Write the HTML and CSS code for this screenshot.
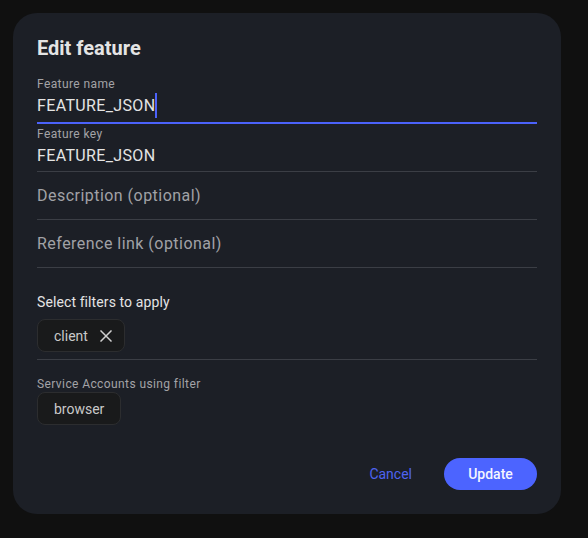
FILE: index.html
```html
<!DOCTYPE html>
<html lang="en">
<head>
<meta charset="utf-8">
<title>Edit feature</title>
<link rel="stylesheet" href="styles.css">
</head>
<body>
<div class="page">
  <div class="dialog">
    <h2 class="title">Edit feature</h2>

    <div class="field field-focused">
      <div class="field-label">Feature name</div>
      <div class="field-input"><span class="value">FEATURE_JSON</span><span class="caret"></span></div>
    </div>

    <div class="field field-key">
      <div class="field-label">Feature key</div>
      <div class="field-input"><span class="value">FEATURE_JSON</span></div>
    </div>

    <div class="field field-empty">
      <div class="placeholder">Description (optional)</div>
    </div>

    <div class="field field-empty">
      <div class="placeholder">Reference link (optional)</div>
    </div>

    <div class="filters">
      <div class="section-label">Select filters to apply</div>
      <div class="chips">
        <span class="chip">client<svg class="chip-x" width="12" height="12" viewBox="0 0 12 12"><path d="M1 1 L11 11 M11 1 L1 11" stroke="#cfcfcf" stroke-width="1.5" fill="none" stroke-linecap="square"/></svg></span>
      </div>
    </div>

    <div class="accounts">
      <div class="small-label">Service Accounts using filter</div>
      <div class="chips">
        <span class="chip">browser</span>
      </div>
    </div>

    <div class="actions">
      <button class="btn-text">Cancel</button>
      <button class="btn-primary">Update</button>
    </div>
  </div>
</div>
</body>
</html>
```
FILE: styles.css
```css
html, body {
  margin: 0;
  padding: 0;
  background: #101010;
}

body {
  font-family: Roboto, "Liberation Sans", Arial, sans-serif;
  color: #e2e2e2;
}

.page {
  padding: 13px;
}

.dialog {
  width: 548px;
  box-sizing: border-box;
  background: #1c1f26;
  border-radius: 24px;
  padding: 19px 24px 24px;
}

.title {
  margin: 0;
  font-size: 20px;
  line-height: 32px;
  font-weight: 700;
  color: #e4e4e4;
}

.field-label {
  font-size: 12px;
  line-height: 16px;
  letter-spacing: 0.4px;
  color: #a3a3a6;
}

.field-input {
  font-size: 16px;
  line-height: 24px;
  letter-spacing: 0.35px;
  color: #e4e4e4;
  display: flex;
  align-items: center;
}

.field-focused {
  margin-top: 12px;
}

.field-focused .field-input {
  padding: 1px 0 4px;
  border-bottom: 2px solid #4b62fa;
}

.caret {
  display: inline-block;
  width: 2px;
  height: 25px;
  background: #4b62fa;
}

.field-key {
  margin-top: 2px;
}

.field-key .field-input {
  padding: 2px 0 3px;
  border-bottom: 1px solid #3b3e45;
}

.field-empty {
  padding: 12px 0 11px;
  border-bottom: 1px solid #3b3e45;
}

.placeholder {
  font-size: 16px;
  line-height: 24px;
  letter-spacing: 0.47px;
  color: #a1a2a6;
}

.filters {
  padding: 24px 0 7px;
  border-bottom: 1px solid #3b3e45;
}

.section-label {
  font-size: 14px;
  line-height: 20px;
  letter-spacing: 0.1px;
  color: #e4e4e4;
}

.filters .chips {
  margin-top: 7px;
}

.chips {
  display: flex;
  gap: 8px;
}

.chip {
  display: inline-flex;
  align-items: center;
  height: 33px;
  box-sizing: border-box;
  padding: 0 16px;
  background: #191a1b;
  border: 1px solid #2c2d2f;
  border-radius: 8px;
  font-size: 14px;
  color: #c9c9c9;
}

.chips .chip:has(.chip-x) {
  padding-right: 12px;
}

.chip-x {
  margin-left: 12px;
  display: block;
}

.accounts {
  padding-top: 16px;
}

.small-label {
  font-size: 12px;
  line-height: 16px;
  letter-spacing: 0.4px;
  color: #a3a3a6;
}

.actions {
  margin-top: 33px;
  display: flex;
  justify-content: flex-end;
  align-items: center;
  gap: 24px;
}

button {
  font-family: inherit;
  border: none;
  cursor: pointer;
}

.btn-text {
  background: transparent;
  color: #4e63f0;
  font-size: 14px;
  line-height: 32px;
  height: 32px;
  padding: 0 8px;
}

.btn-primary {
  background: #4c64ff;
  color: #f4f5ff;
  font-size: 14px;
  font-weight: 500;
  line-height: 32px;
  height: 32px;
  width: 93px;
  padding: 0;
  border-radius: 16px;
}
```
